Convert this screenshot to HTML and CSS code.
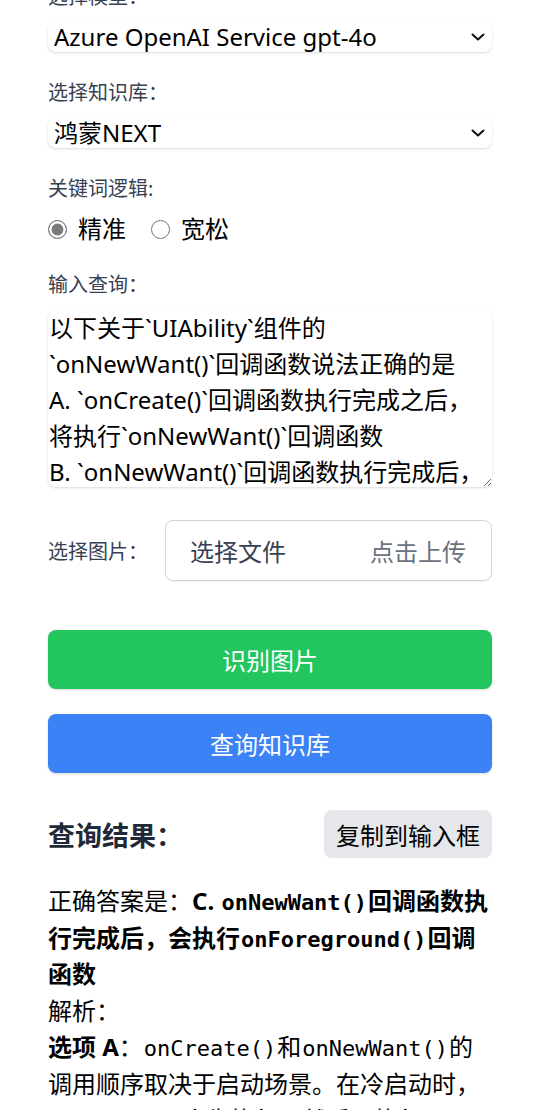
FILE: index.html
```html
<!DOCTYPE html>
<html lang="zh-CN">
<head>
<meta charset="utf-8">
<title>知识库查询</title>
<link rel="stylesheet" href="styles.css">
</head>
<body>
<main class="page">
  <div class="field field-model">
    <label class="label" for="model">选择模型：</label>
    <div class="select-wrap">
      <select id="model" class="select"><option>Azure OpenAI Service gpt-4o</option></select>
      <svg class="chevron" width="14" height="8" viewBox="0 0 14 8"><polyline points="1.5,1.5 7,6.5 12.5,1.5" fill="none" stroke="#111" stroke-width="2" stroke-linecap="round" stroke-linejoin="round"/></svg>
    </div>
  </div>

  <div class="field">
    <label class="label" for="kb">选择知识库：</label>
    <div class="select-wrap">
      <select id="kb" class="select"><option>鸿蒙NEXT</option></select>
      <svg class="chevron" width="14" height="8" viewBox="0 0 14 8"><polyline points="1.5,1.5 7,6.5 12.5,1.5" fill="none" stroke="#111" stroke-width="2" stroke-linecap="round" stroke-linejoin="round"/></svg>
    </div>
  </div>

  <div class="field">
    <span class="label">关键词逻辑:</span>
    <div class="radios">
      <label class="radio-item"><input class="radio" type="radio" name="logic" checked><span>精准</span></label>
      <label class="radio-item"><input class="radio" type="radio" name="logic"><span>宽松</span></label>
    </div>
  </div>

  <div class="field">
    <label class="label" for="query">输入查询：</label>
    <textarea id="query" class="textarea">以下关于`UIAbility`组件的
`onNewWant()`回调函数说法正确的是
A. `onCreate()`回调函数执行完成之后，
将执行`onNewWant()`回调函数
B. `onNewWant()`回调函数执行完成后，
会执行`onForeground()`回调函数
C. `onNewWant()`回调函数执行完成后，
会执行`onForeground()`回调函数
D. 以上说法都不对</textarea>
  </div>

  <div class="file-row">
    <span class="file-label">选择图片：</span>
    <div class="file-box">
      <span class="file-choose">选择文件</span>
      <span class="file-hint">点击上传</span>
    </div>
  </div>

  <button class="btn btn-green">识别图片</button>
  <button class="btn btn-blue">查询知识库</button>

  <div class="result-head">
    <h2 class="result-title">查询结果：</h2>
    <button class="copy-btn">复制到输入框</button>
  </div>

  <div class="result">
    <p>正确答案是：<strong>C. <code>onNewWant()</code>回调函数执行完成后，会执行<code>onForeground()</code>回调函数</strong></p>
    <p>解析：</p>
    <p><strong>选项 A</strong>：<code>onCreate()</code>和<code>onNewWant()</code>的调用顺序取决于启动场景。在冷启动时，<code>onCreate()</code>会先执行，然后再执行<code>onWindowStageCreate()</code>，而不是<code>onNewWant()</code>。</p>
  </div>
</main>
</body>
</html>
```

FILE: styles.css
```css
* { box-sizing: border-box; }

html, body {
  margin: 0;
  padding: 0;
  background: #ffffff;
}

body {
  font-family: "Noto Sans", "Noto Sans CJK SC", sans-serif;
  color: #111111;
}

.page {
  margin-top: -17px;
  padding: 0 48px;
  display: flex;
  flex-direction: column;
}

.field {
  display: flex;
  flex-direction: column;
  margin-bottom: 27px;
}

.label {
  display: block;
  font-size: 20px;
  line-height: 27px;
  color: #374151;
  margin-bottom: 12px;
}

.select-wrap {
  position: relative;
}

.select {
  appearance: none;
  -webkit-appearance: none;
  width: 100%;
  height: 30px;
  border: none;
  border-radius: 8px;
  background: #ffffff;
  box-shadow: 0 1px 3px rgba(0, 0, 0, 0.10), 0 1px 2px rgba(0, 0, 0, 0.05);
  font-family: inherit;
  font-size: 24px;
  line-height: 30px;
  color: #000000;
  padding: 0 30px 0 6px;
  outline: none;
}

.chevron {
  position: absolute;
  right: 7px;
  top: 11px;
  pointer-events: none;
}

.radios {
  display: flex;
  align-items: center;
  gap: 25px;
  height: 30px;
}

.radio-item {
  display: flex;
  align-items: center;
  gap: 11px;
  font-size: 24px;
  line-height: 30px;
  color: #000000;
}

.radio {
  appearance: none;
  -webkit-appearance: none;
  width: 19px;
  height: 19px;
  margin: 0;
  border: 1.6px solid #767676;
  border-radius: 50%;
  background: #ffffff;
}

.radio:checked {
  border-color: #777777;
  background: #7a7a7a;
  box-shadow: inset 0 0 0 2.6px #ffffff;
}

.textarea {
  width: 100%;
  height: 177px;
  border: none;
  border-radius: 8px;
  background: #ffffff;
  box-shadow: 0 1px 3px rgba(0, 0, 0, 0.10), 0 1px 2px rgba(0, 0, 0, 0.05);
  font-family: inherit;
  font-size: 24px;
  line-height: 36px;
  color: #000000;
  padding: 0 1px;
  resize: vertical;
  overflow: hidden;
  white-space: pre;
  outline: none;
}

.file-row {
  display: flex;
  align-items: center;
  margin-top: 6px;
}

.file-label {
  font-size: 20px;
  color: #374151;
  width: 117px;
}

.file-box {
  flex: 1;
  height: 61px;
  border: 1px solid #d1d5db;
  border-radius: 8px;
  box-shadow: 0 1px 2px rgba(0, 0, 0, 0.05);
  display: flex;
  align-items: center;
  justify-content: space-between;
  padding: 0 25px 0 24px;
  font-size: 24px;
}

.file-choose { color: #374151; }
.file-hint { color: #6b7280; }

.btn {
  display: block;
  width: 100%;
  height: 59px;
  border: none;
  border-radius: 8px;
  font-family: inherit;
  font-size: 24px;
  color: #ffffff;
  box-shadow: 0 1px 3px rgba(0, 0, 0, 0.10), 0 1px 2px rgba(0, 0, 0, 0.06);
}

.btn-green {
  margin-top: 49px;
  background: #22c55e;
}

.btn-blue {
  margin-top: 25px;
  background: #3b82f6;
}

.result-head {
  margin-top: 37px;
  display: flex;
  align-items: center;
  justify-content: space-between;
}

.result-title {
  margin: 0;
  font-size: 27px;
  font-weight: 700;
  color: #1f2937;
}

.copy-btn {
  height: 48px;
  padding: 0 12px;
  border: none;
  border-radius: 8px;
  background: #e5e7eb;
  font-family: inherit;
  font-size: 24px;
  color: #000000;
}

.result {
  margin-top: 25px;
  font-size: 24px;
  line-height: 36.5px;
  color: #000000;
}

.result p {
  margin: 0;
}

.result code {
  font-family: "DejaVu Sans Mono", monospace;
  font-size: 22px;
  line-height: 1;
  padding: 0 1px;
}
```
